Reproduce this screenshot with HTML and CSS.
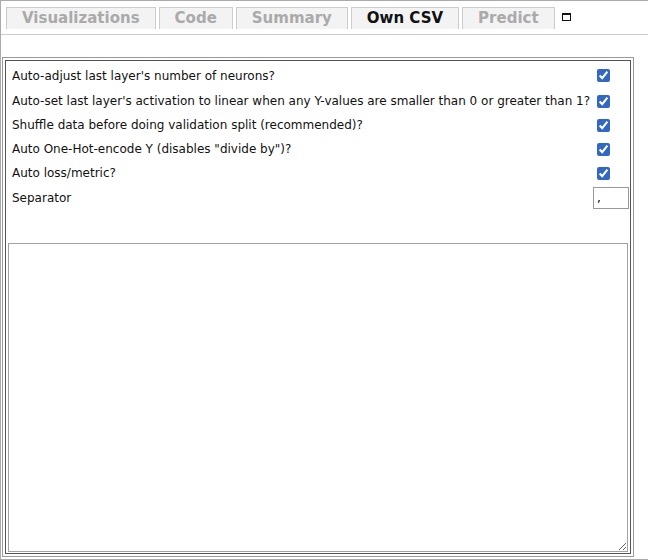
FILE: index.html
```html
<!DOCTYPE html>
<html lang="en">
<head>
    <meta charset="UTF-8">
    <title>Own CSV</title>
    <link rel="stylesheet" href="styles.css">
</head>
<body>
    <div class="page">
        <div class="tabs">
            <div class="tab">Visualizations</div>
            <div class="tab">Code</div>
            <div class="tab">Summary</div>
            <div class="tab active">Own CSV</div>
            <div class="tab">Predict</div>
            <span class="max-icon"></span>
        </div>
        <div class="tab-line"></div>

        <div class="box">
            <div class="box-inner">
                <table class="options">
                    <tr class="first">
                        <td>Auto-adjust last layer's number of neurons?</td>
                        <td><input type="checkbox" checked></td>
                    </tr>
                    <tr>
                        <td>Auto-set last layer's activation to linear when any Y-values are smaller than 0 or greater than 1?</td>
                        <td><input type="checkbox" checked></td>
                    </tr>
                    <tr>
                        <td>Shuffle data before doing validation split (recommended)?</td>
                        <td><input type="checkbox" checked></td>
                    </tr>
                    <tr>
                        <td>Auto One-Hot-encode Y (disables "divide by")?</td>
                        <td><input type="checkbox" checked></td>
                    </tr>
                    <tr>
                        <td>Auto loss/metric?</td>
                        <td><input type="checkbox" checked></td>
                    </tr>
                    <tr class="sep-row">
                        <td>Separator</td>
                        <td><input type="text" class="sep" value=","></td>
                    </tr>
                </table>
                <textarea class="csv"></textarea>
            </div>
        </div>
    </div>
</body>
</html>
```

FILE: styles.css
```css
body {
    margin: 0;
    font-family: "DejaVu Sans", sans-serif;
    overflow: hidden;
    background: white;
}
.page {
    height: 558px;
    border-top: 1px solid #aaa;
    border-left: 1px solid #aaa;
    border-bottom: 1px solid #aaa;
}
.tabs {
    display: flex;
    align-items: flex-start;
    padding: 6px 0 0 5px;
}
.tab {
    height: 21px;
    line-height: 20px;
    padding: 0 15px;
    margin-right: 3px;
    border: 1px solid #ccc;
    border-bottom: none;
    background-color: #f3f3f3;
    color: #aaa;
    font-size: 15px;
    font-weight: bold;
}
.tab.active {
    color: #111;
}
.max-icon {
    display: block;
    width: 7px;
    height: 5px;
    margin: 6px 0 0 4px;
    border: 1px solid #111;
    border-top-width: 2px;
}
.tab-line {
    margin-top: 5px;
    border-top: 1px solid #ccc;
}
.box {
    width: 626px;
    margin: 22px 0 0 1px;
    border: 1px solid #999;
    padding: 2px;
}
.box-inner {
    border: 1px solid #555;
    padding: 0 0 1px 1px;
}
.options {
    width: 621px;
    margin-left: 1px;
    border-collapse: collapse;
    font-size: 12px;
    color: #111;
}
.options td {
    height: 24px;
    padding: 0 2px 0 4px;
    white-space: nowrap;
}
.options td:last-child {
    width: 36px;
    padding: 0;
}
.options tr.first td {
    height: 27px;
    padding-top: 1px;
}
.options tr.sep-row td {
    height: 26px;
}
.options input[type="checkbox"] {
    width: 13px;
    height: 13px;
    margin: 3px 3px 3px 4px;
    vertical-align: middle;
    accent-color: #3268c4;
}
.sep {
    box-sizing: border-box;
    width: 36px;
    height: 22px;
    padding: 2px 3px;
    border: 1px solid #999;
    font-family: "DejaVu Sans", sans-serif;
    font-size: 12px;
    vertical-align: middle;
}
.csv {
    display: block;
    box-sizing: border-box;
    width: 620px;
    height: 309px;
    margin: 32px 0 0 1px;
    border: 1px solid #a0a0a8;
    resize: both;
}
```
